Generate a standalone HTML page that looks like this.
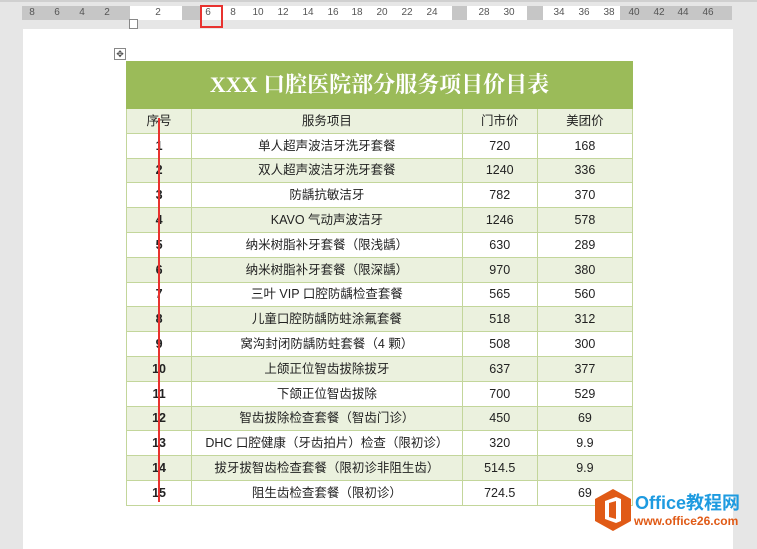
<!DOCTYPE html>
<html><head><meta charset="utf-8"><style>
body{margin:0;width:757px;height:537px;background:#e6e6e6;position:relative;overflow:hidden;font-family:"Liberation Sans","Noto Sans CJK SC",sans-serif}
.rul{position:absolute;top:6px;height:14px;font-size:10px;color:#444;line-height:14px}
.r{position:absolute;top:0;font-size:10px;color:#555;transform:translateX(-50%)}
.page{position:absolute;left:23px;top:29px;width:710px;height:520px;background:#fff}
table{position:absolute;left:126px;top:61px;border-collapse:collapse;font-size:12.5px;color:#222}
td{border:1px solid #c3d69b;height:23.8px;padding:0;text-align:center;line-height:14px;vertical-align:middle}
td span{display:inline-block;vertical-align:middle;line-height:14px}
tr.s td{background:#ebf1de}
.t td{background:#9bbb59;color:#fff;font-family:"Liberation Serif","Noto Serif CJK SC",serif;font-weight:bold;font-size:22px;height:46px;border-color:#9bbb59;line-height:26px}
td.n{font-weight:bold}
</style></head><body>
<div style="position:absolute;left:0;top:0;width:757px;height:2px;background:#d0d0d0"></div>
<div style="position:absolute;left:22px;top:6px;width:710px;height:14px;background:#c6c6c6"></div>
<div style="position:absolute;left:130px;top:6px;width:52px;height:14px;background:#fff"></div>
<div style="position:absolute;left:200px;top:6px;width:252px;height:14px;background:#fff"></div>
<div style="position:absolute;left:467px;top:6px;width:60px;height:14px;background:#fff"></div>
<div style="position:absolute;left:543px;top:6px;width:77px;height:14px;background:#fff"></div>
<div class="rul" style="left:0;width:757px">
<span class="r" style="left:32px">8</span><span class="r" style="left:57px">6</span><span class="r" style="left:82px">4</span><span class="r" style="left:107px">2</span><span class="r" style="left:158px">2</span><span class="r" style="left:208px">6</span><span class="r" style="left:233px">8</span><span class="r" style="left:258px">10</span><span class="r" style="left:283px">12</span><span class="r" style="left:308px">14</span><span class="r" style="left:333px">16</span><span class="r" style="left:357px">18</span><span class="r" style="left:382px">20</span><span class="r" style="left:407px">22</span><span class="r" style="left:432px">24</span><span class="r" style="left:484px">28</span><span class="r" style="left:509px">30</span><span class="r" style="left:559px">34</span><span class="r" style="left:584px">36</span><span class="r" style="left:609px">38</span><span class="r" style="left:634px">40</span><span class="r" style="left:659px">42</span><span class="r" style="left:683px">44</span><span class="r" style="left:708px">46</span>
</div>
<div style="position:absolute;left:200px;top:5px;width:23px;height:23px;border:2px solid #e8322f;box-sizing:border-box"></div>
<div style="position:absolute;left:129px;top:19px;width:7px;height:8px;border:1px solid #888;background:#fff"></div>
<div class="page"></div>
<div style="position:absolute;left:114px;top:48px;width:10px;height:10px;border:1px solid #888;font-size:9px;line-height:10px;text-align:center;color:#444">✥</div>
<table>
<tr class="t"><td colspan="4" style="width:505px">XXX 口腔医院部分服务项目价目表</td></tr>
<tr class="s"><td style="width:64px">序号</td><td style="width:269px">服务项目</td><td style="width:74px">门市价</td><td style="width:94px">美团价</td></tr>
<tr><td class="n">1</td><td>单人超声波洁牙洗牙套餐</td><td>720</td><td>168</td></tr>
<tr class="s"><td class="n">2</td><td>双人超声波洁牙洗牙套餐</td><td>1240</td><td>336</td></tr>
<tr><td class="n">3</td><td>防龋抗敏洁牙</td><td>782</td><td>370</td></tr>
<tr class="s"><td class="n">4</td><td>KAVO 气动声波洁牙</td><td>1246</td><td>578</td></tr>
<tr><td class="n">5</td><td>纳米树脂补牙套餐（限浅龋）</td><td>630</td><td>289</td></tr>
<tr class="s"><td class="n">6</td><td>纳米树脂补牙套餐（限深龋）</td><td>970</td><td>380</td></tr>
<tr><td class="n">7</td><td>三叶 VIP 口腔防龋检查套餐</td><td>565</td><td>560</td></tr>
<tr class="s"><td class="n">8</td><td>儿童口腔防龋防蛀涂氟套餐</td><td>518</td><td>312</td></tr>
<tr><td class="n">9</td><td>窝沟封闭防龋防蛀套餐（4 颗）</td><td>508</td><td>300</td></tr>
<tr class="s"><td class="n">10</td><td>上颌正位智齿拔除拔牙</td><td>637</td><td>377</td></tr>
<tr><td class="n">11</td><td>下颌正位智齿拔除</td><td>700</td><td>529</td></tr>
<tr class="s"><td class="n">12</td><td>智齿拔除检查套餐（智齿门诊）</td><td>450</td><td>69</td></tr>
<tr><td class="n">13</td><td>DHC 口腔健康（牙齿拍片）检查（限初诊）</td><td>320</td><td>9.9</td></tr>
<tr class="s"><td class="n">14</td><td>拔牙拔智齿检查套餐（限初诊非阻生齿）</td><td>514.5</td><td>9.9</td></tr>
<tr><td class="n">15</td><td>阻生齿检查套餐（限初诊）</td><td>724.5</td><td>69</td></tr>
</table>
<div style="position:absolute;left:158px;top:118px;width:2px;height:384px;background:#e8322f"></div>
<svg style="position:absolute;left:594px;top:488px" width="38" height="44" viewBox="0 0 38 44"><polygon points="19,1 37,11 37,33 19,43 1,33 1,11" fill="#e05a16"/><path d="M11 13 L22 9 L27 11 L27 33 L22 35 L11 31 Z" fill="#fff"/><path d="M15 15 L22 13 L22 31 L15 29 Z" fill="#e05a16"/></svg>
<div style="position:absolute;left:635px;top:492px;font-size:18px;font-weight:bold;color:#1e9be0;line-height:22px">Office教程网</div>
<div style="position:absolute;left:634px;top:514px;font-size:12px;font-weight:bold;color:#e05a16;line-height:14px">www.office26.com</div>
</body></html>
